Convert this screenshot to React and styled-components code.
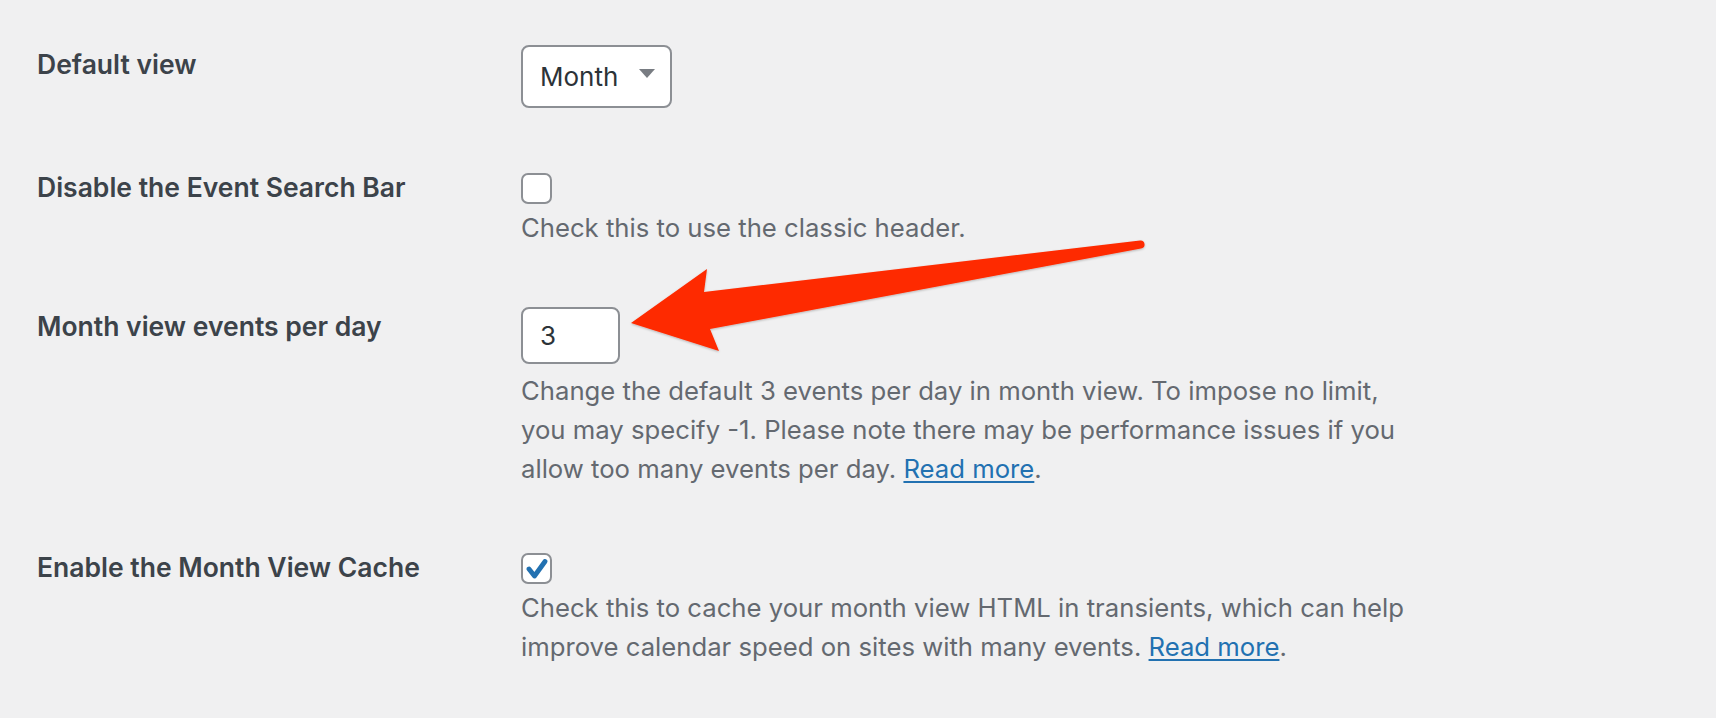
import styled, { createGlobalStyle } from 'styled-components';

const GlobalStyle = createGlobalStyle`
  html, body {
    margin: 0;
    padding: 0;
    background: #f0f0f1;
  }
  body {
    font-family: Inter, "Liberation Sans", Arial, sans-serif;
    -webkit-font-smoothing: antialiased;
  }
`;

const Page = styled.div`
  position: relative;
  width: 1716px;
  height: 718px;
  padding: 15px 0 0 37px;
  box-sizing: border-box;
  overflow: hidden;
`;

const Row = styled.div`
  display: grid;
  grid-template-columns: 484px 1fr;
  padding: 30px 0;
`;

const Label = styled.div`
  font-size: 26.5px;
  line-height: 34px;
  font-weight: 600;
  color: #3c434a;
  padding-top: 2px;
`;

const Field = styled.div`
  display: flex;
  flex-direction: column;
  align-items: flex-start;
`;

const Select = styled.div`
  display: flex;
  align-items: center;
  justify-content: space-between;
  box-sizing: border-box;
  width: 151px;
  height: 63px;
  padding: 0 15px 0 17px;
  background: #fff;
  border: 2px solid #8c8f94;
  border-radius: 8px;
  font-size: 26px;
  color: #2c3338;
`;

const Caret = styled.span`
  width: 0;
  height: 0;
  margin-top: -6px;
  border-left: 8px solid transparent;
  border-right: 8px solid transparent;
  border-top: 9px solid #787c82;
`;

const NumberInput = styled.input`
  box-sizing: border-box;
  width: 99px;
  height: 57px;
  margin: 0 0 3px;
  padding: 0 0 0 17px;
  background: #fff;
  border: 2px solid #8c8f94;
  border-radius: 8px;
  font-family: inherit;
  font-size: 26px;
  color: #2c3338;
  outline: none;
`;

const Checkbox = styled.span`
  display: flex;
  align-items: center;
  justify-content: center;
  box-sizing: border-box;
  width: 31px;
  height: 31px;
  margin-top: 5px;
  background: #fff;
  border: 2px solid #8c8f94;
  border-radius: 7px;
`;

const Description = styled.p`
  margin: 4px 0 0;
  font-size: 25.7px;
  line-height: 39px;
  color: #646970;
  white-space: nowrap;
`;

const Link = styled.a`
  color: #2271b1;
  text-decoration: underline;
  text-underline-offset: 3px;
`;

const Overlay = styled.svg`
  position: absolute;
  top: 0;
  left: 0;
  pointer-events: none;
`;

const Check = ({ checked }) => (
  <Checkbox>
    {checked && (
      <svg width="22" height="20" viewBox="0 0 22 20">
        <path d="M3 10 L8.5 17 L19 2.5" fill="none" stroke="#2271b1" strokeWidth="4.8" strokeLinecap="round" strokeLinejoin="round" />
      </svg>
    )}
  </Checkbox>
);

export default function App() {
  return (
    <>
      <GlobalStyle />
      <Page>
        <Row>
          <Label>Default view</Label>
          <Field>
            <Select>
              Month
              <Caret />
            </Select>
          </Field>
        </Row>
        <Row>
          <Label>Disable the Event Search Bar</Label>
          <Field>
            <Check />
            <Description>Check this to use the classic header.</Description>
          </Field>
        </Row>
        <Row>
          <Label>Month view events per day</Label>
          <Field>
            <NumberInput type="text" defaultValue="3" readOnly />
            <Description>
              Change the default 3 events per day in month view. To impose no limit,
              <br />
              you may specify -1. Please note there may be performance issues if you
              <br />
              allow too many events per day. <Link href="#">Read more</Link>.
            </Description>
          </Field>
        </Row>
        <Row>
          <Label>Enable the Month View Cache</Label>
          <Field>
            <Check checked />
            <Description>
              Check this to cache your month view HTML in transients, which can help
              <br />
              improve calendar speed on sites with many events. <Link href="#">Read more</Link>.
            </Description>
          </Field>
        </Row>
        <Overlay width="1716" height="718" viewBox="0 0 1716 718">
          <defs>
            <filter id="shade" x="-5%" y="-20%" width="110%" height="140%">
              <feDropShadow dx="0" dy="1" stdDeviation="1.2" floodColor="#000" floodOpacity="0.25" />
            </filter>
          </defs>
          <path
            d="M631 323 L707 269 L704 292 L1140 240.5 A4 4 0 0 1 1141 248.5 L710 329 L719 351 Z"
            fill="#fe2b05"
            filter="url(#shade)"
          />
        </Overlay>
      </Page>
    </>
  );
}
